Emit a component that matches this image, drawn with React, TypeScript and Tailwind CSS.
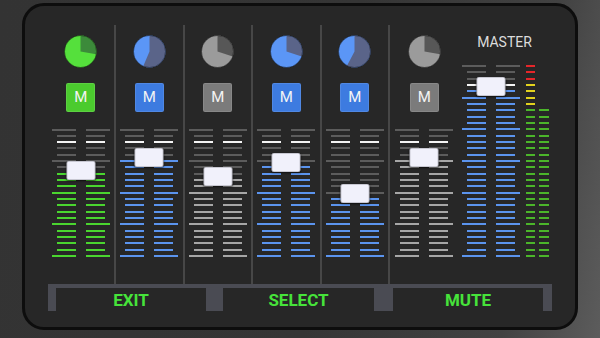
import React from "react";

type Kind = "green" | "blue" | "gray";

const TICK_ON: Record<Kind, string> = {
  green: "#4ad52f",
  blue: "#5b94ee",
  gray: "#a6a6a6",
};
const TICK_OFF = "#5c5c5c";
const TICK_WHITE = "#f4f4f4";

const PIE: Record<Kind, { light: string; dark: string }> = {
  green: { light: "#55e03c", dark: "#3c8a3a" },
  blue: { light: "#5b96f6", dark: "#5a6489" },
  gray: { light: "#9b9b9b", dark: "#575757" },
};

const BTN: Record<Kind, string> = {
  green: "bg-[#4bcb2e]",
  blue: "bg-[#3d7be0]",
  gray: "bg-[#7b7b7b]",
};

type Ch = { kind: Kind; angle: number; knobTop: number; activeFrom: number; sep: boolean };

const CHANNELS: Ch[] = [
  { kind: "green", angle: 100, knobTop: 32, activeFrom: 7, sep: true },
  { kind: "blue", angle: 203, knobTop: 19, activeFrom: 5, sep: true },
  { kind: "gray", angle: 108, knobTop: 38.5, activeFrom: 8, sep: true },
  { kind: "blue", angle: 108, knobTop: 24, activeFrom: 6, sep: true },
  { kind: "blue", angle: 208, knobTop: 55.5, activeFrom: 11, sep: true },
  { kind: "gray", angle: 100, knobTop: 19.5, activeFrom: 5, sep: false },
];

function Pie({ kind, angle }: { kind: Kind; angle: number }) {
  const r = 16;
  const c = 16.5;
  const a = (angle * Math.PI) / 180;
  const ex = c + r * Math.sin(a);
  const ey = c - r * Math.cos(a);
  const large = angle > 180 ? 1 : 0;
  const col = PIE[kind];
  return (
    <svg width="33" height="33" viewBox="0 0 33 33">
      <circle cx={c} cy={c} r={r} fill={col.light} />
      <path d={`M${c},${c} L${c},${c - r} A${r},${r} 0 ${large} 1 ${ex},${ey} Z`} fill={col.dark} />
      <circle cx={c} cy={c} r={r} fill="none" stroke="rgba(0,0,0,0.35)" strokeWidth="1" />
    </svg>
  );
}

function TickColumn({
  rows,
  side,
  color,
}: {
  rows: number;
  side: "left" | "right";
  color: (k: number) => string;
}) {
  return (
    <div className={`flex h-full w-[24px] flex-col justify-between ${side === "left" ? "items-end" : "items-start"}`}>
      {Array.from({ length: rows }).map((_, k) => (
        <div
          key={k}
          className={`h-[2px] ${k % 5 === 0 ? "w-[24px]" : "w-[19px]"}`}
          style={{ backgroundColor: color(k) }}
        />
      ))}
    </div>
  );
}

function Knob({ top }: { top: number }) {
  return (
    <div
      className="absolute left-1/2 h-[19px] w-[29px] -translate-x-1/2 rounded-[2px] border border-[#c8c8d2] bg-[#f1f1fb] shadow-[0_1px_2px_rgba(0,0,0,0.6)]"
      style={{ top }}
    />
  );
}

function Channel({ ch }: { ch: Ch }) {
  const color = (k: number) =>
    k === 2 ? TICK_WHITE : k >= ch.activeFrom ? TICK_ON[ch.kind] : TICK_OFF;
  return (
    <div
      className={`flex h-full w-[68.5px] flex-col items-center pt-[10px] ${
        ch.sep ? "border-r-2 border-[#474747]" : ""
      }`}
    >
      <Pie kind={ch.kind} angle={ch.angle} />
      <div
        className={`mt-[15px] flex h-[29px] w-[29px] items-center justify-center rounded-[2px] border border-white/10 text-[15px] text-[#f4f4f4] ${BTN[ch.kind]}`}
      >
        M
      </div>
      <div className="relative mt-[16.5px] flex h-[128.67px] gap-[10px]">
        <TickColumn rows={21} side="left" color={color} />
        <TickColumn rows={21} side="right" color={color} />
        <Knob top={ch.knobTop} />
      </div>
    </div>
  );
}

function Meter({ rows, start, width }: { rows: number; start: number; width: string }) {
  const meterColor = (k: number) => (k < 3 ? "#e5262a" : k < 7 ? "#e2d21e" : "#4bb52a");
  return (
    <div className={`flex h-full flex-col justify-between ${width}`}>
      {Array.from({ length: rows }).map((_, k) => (
        <div
          key={k}
          className="h-[2px] w-full"
          style={{ backgroundColor: k >= start ? meterColor(k) : "transparent" }}
        />
      ))}
    </div>
  );
}

function Master() {
  const color = (k: number) => (k === 3 ? TICK_WHITE : k >= 4 ? TICK_ON.blue : TICK_OFF);
  return (
    <div className="flex h-full w-[92px] flex-col pt-[9px]">
      <div className="h-[16px] text-center text-[14px] leading-[16px] text-[#dcdcdc]">MASTER</div>
      <div className="mt-[15px] flex h-[192px] pl-[3.5px]">
        <div className="relative flex h-full gap-[10px]">
          <TickColumn rows={31} side="left" color={color} />
          <TickColumn rows={31} side="right" color={color} />
          <Knob top={12.3} />
        </div>
        <div className="ml-[6px] flex h-full gap-[4px]">
          <Meter rows={31} start={0} width="w-[9px]" />
          <Meter rows={31} start={7} width="w-[10px]" />
        </div>
      </div>
    </div>
  );
}

export default function App() {
  return (
    <div
      className="h-[338px] w-[600px] overflow-hidden bg-[linear-gradient(100deg,#333333_0%,#353535_55%,#424242_85%,#5c5c5c_100%)] pt-[3px]"
      style={{ fontFamily: "Roboto, 'Liberation Sans', sans-serif" }}
    >
      <div className="ml-[22px] h-[327px] w-[556px] rounded-[22px] border-[3px] border-[#0d0d0d] bg-[#272727]">
        <div className="flex h-[278px] pl-[22.5px] pt-[19px]">
          {CHANNELS.map((ch, i) => (
            <Channel key={i} ch={ch} />
          ))}
          <Master />
        </div>
        <div className="ml-[23px] w-[504px]">
          <div className="h-[4px] bg-[#4a4b53]" />
          <div className="flex h-[23px]">
            <div className="w-[8px] bg-[#4a4b53]" />
            <div className="w-[150px] pt-[2px] text-center text-[17px] font-bold leading-[21px] text-[#46e33a]">EXIT</div>
            <div className="w-[17px] bg-[#4a4b53]" />
            <div className="w-[151px] pt-[2px] text-center text-[17px] font-bold leading-[21px] text-[#46e33a]">SELECT</div>
            <div className="w-[19px] bg-[#4a4b53]" />
            <div className="w-[150px] pt-[2px] text-center text-[17px] font-bold leading-[21px] text-[#46e33a]">MUTE</div>
            <div className="w-[9px] bg-[#4a4b53]" />
          </div>
        </div>
      </div>
    </div>
  );
}
